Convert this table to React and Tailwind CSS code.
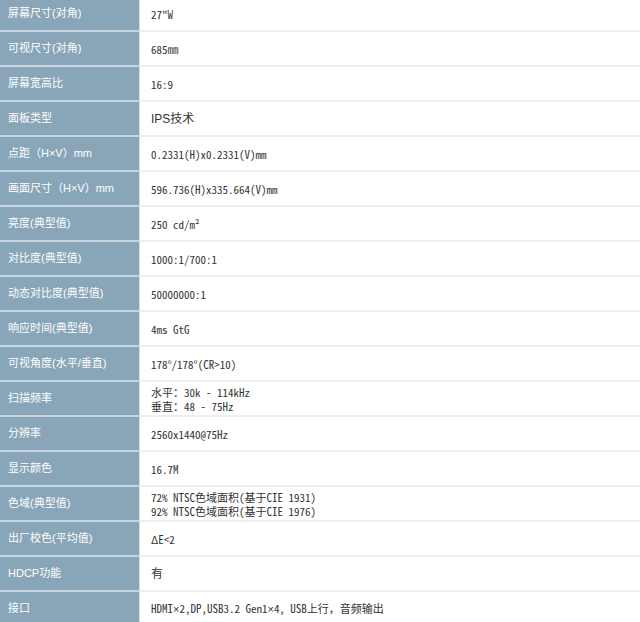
const specs = [
  ['屏幕尺寸(对角)', ['27"W']],
  ['可视尺寸(对角)', ['685㎜']],
  ['屏幕宽高比', ['16:9']],
  ['面板类型', ['IPS技术'], true],
  ['点距（H×V）mm', ['0.2331(H)x0.2331(V)mm']],
  ['画面尺寸（H×V）mm', ['596.736(H)x335.664(V)mm']],
  ['亮度(典型值)', ['250 cd/m²']],
  ['对比度(典型值)', ['1000:1/700:1']],
  ['动态对比度(典型值)', ['50000000:1']],
  ['响应时间(典型值)', ['4ms GtG']],
  ['可视角度(水平/垂直)', ['178°/178°(CR>10)']],
  ['扫描频率', ['水平：30k - 114kHz', '垂直：48 - 75Hz']],
  ['分辨率', ['2560x1440@75Hz']],
  ['显示颜色', ['16.7M']],
  ['色域(典型值)', ['72% NTSC色域面积(基于CIE 1931)', '92% NTSC色域面积(基于CIE 1976)']],
  ['出厂校色(平均值)', ['ΔE<2']],
  ['HDCP功能', ['有'], true],
  ['接口', ['HDMI×2,DP,USB3.2 Gen1×4, USB上行，音频输出']],
];

const sans = "font-['Liberation_Sans','Noto_Sans_CJK_SC',sans-serif]";
const mono = "font-['Noto_Sans_Mono_CJK_SC','Liberation_Mono','Noto_Sans_CJK_SC',monospace]";

// the CJK mono font draws × full width; the reference has a narrow one
function withNarrowTimes(text) {
  const parts = text.split('×');
  return parts.map((p, i) => (
    <span key={i}>
      {i > 0 && <span className="font-['Liberation_Sans',sans-serif]">×</span>}
      {p}
    </span>
  ));
}

function SpecRow({ label, lines, plain }) {
  return (
    <div className="flex h-[35px]">
      <div className={`w-[139px] shrink-0 flex items-center pl-2 bg-[#88a6b8] text-white text-[11px] border-b-2 border-[#c6d5de] ${sans}`}>
        {label}
      </div>
      <div className="w-px shrink-0 bg-[#d2dee5]" />
      <div className="flex-1 flex flex-col justify-center pl-[11px] bg-white text-[#333] border-b-2 border-[#efefef]">
        {lines.map((l, i) => (
          <div key={i} className={plain ? `text-[12px] ${sans}` : `text-[11px] leading-[14px] ${mono}`}>
            {withNarrowTimes(l)}
          </div>
        ))}
      </div>
    </div>
  );
}

export default function App() {
  return (
    <div className="w-[640px] h-[622px] overflow-hidden bg-white">
      <div className="-mt-[3px]">
        {specs.map(([label, lines, plain]) => (
          <SpecRow key={label} label={label} lines={lines} plain={plain} />
        ))}
      </div>
    </div>
  );
}
